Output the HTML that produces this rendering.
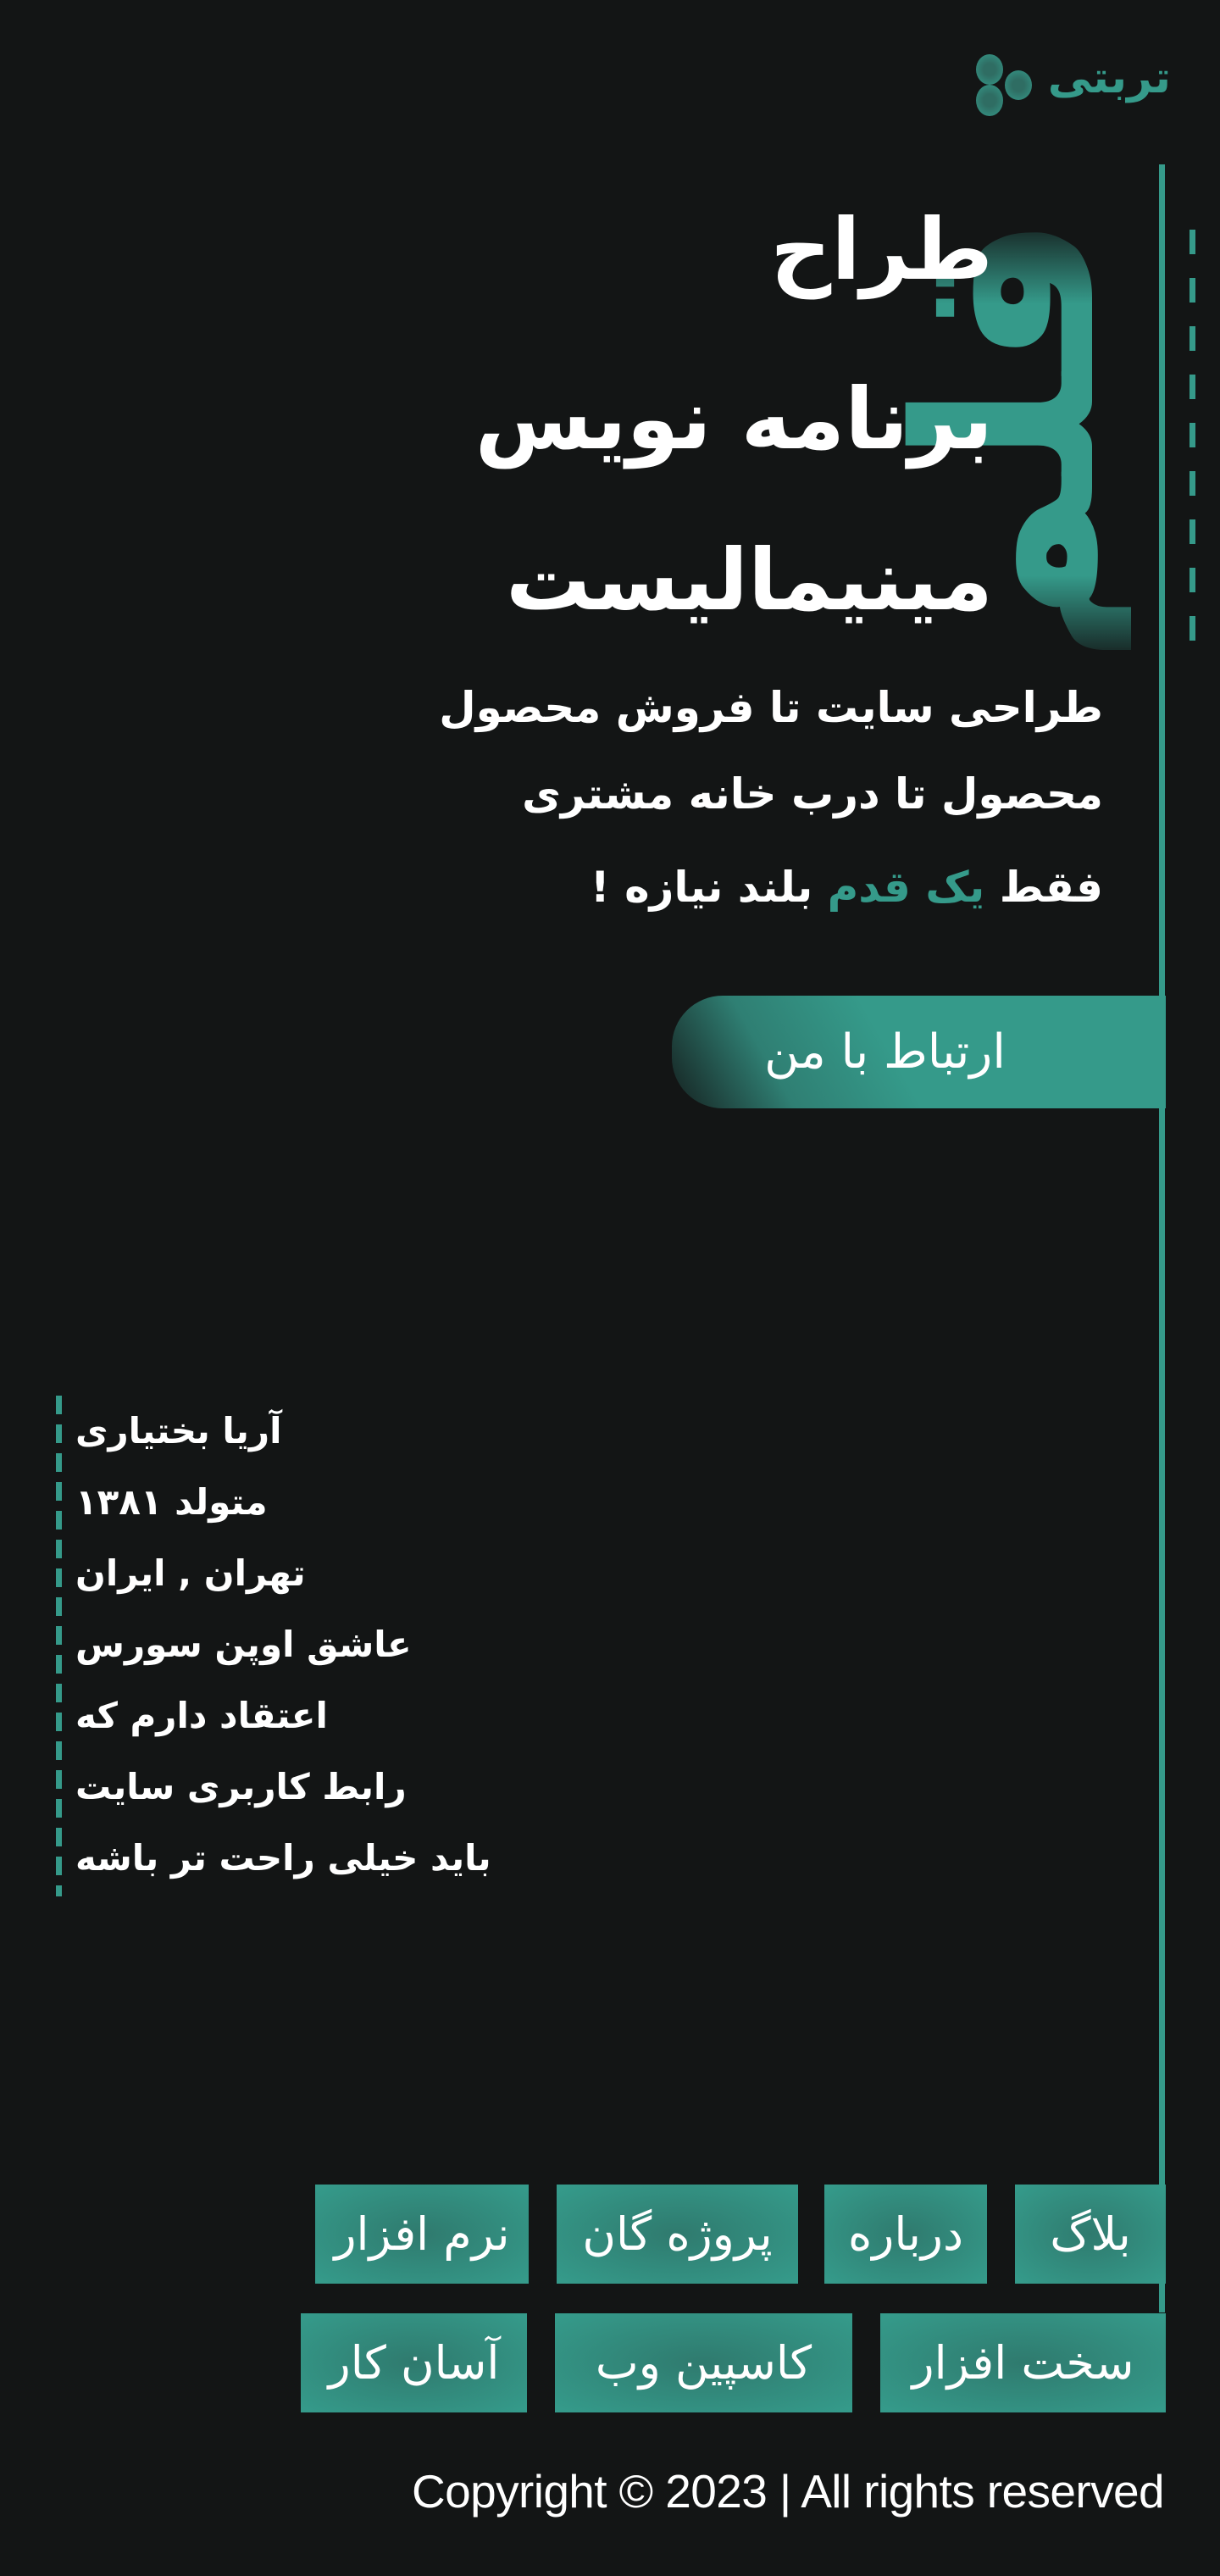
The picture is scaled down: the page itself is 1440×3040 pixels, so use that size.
<!DOCTYPE html>
<html lang="fa"><head><meta charset="utf-8">
<style>
*{margin:0;padding:0;box-sizing:border-box}
html,body{width:1440px;height:3040px;background:#131515;overflow:hidden}
body{position:relative;font-family:"DejaVu Sans","Liberation Sans",sans-serif;color:#fff}
.abs{position:absolute}
.logo{right:58px;top:62px;font-size:52px;font-weight:bold;color:#359a8a;direction:rtl}
.dot{position:absolute;border-radius:50%;background:radial-gradient(circle,#2f6d63 30%,#359a8a 100%)}
.vline{left:1368px;top:194px;width:7px;height:2535px;background:#359a8a}
.dash{left:1404px;top:271px;width:7px;height:505px;background:repeating-linear-gradient(to bottom,#359a8a 0 29px,transparent 29px 57px)}
.cal{left:1190px;top:519px;transform:translate(-50%,-50%) rotate(-90deg);font-size:290px;font-weight:bold;line-height:1;white-space:nowrap;direction:rtl;
 background:linear-gradient(to right,rgba(53,154,138,0) 0%,#359a8a 20%,#359a8a 80%,rgba(53,154,138,0) 100%);-webkit-background-clip:text;background-clip:text;color:transparent}
.h1{right:268px;direction:rtl;font-size:100px;font-weight:bold;white-space:nowrap;line-height:1}
.sub{right:138px;direction:rtl;font-size:50px;font-weight:bold;white-space:nowrap;line-height:1}
.btn{left:793px;top:1175px;width:583px;height:133px;border-radius:60px 0 0 60px;background:linear-gradient(60deg,#15201f 0%,#2f7f73 22%,#359a8a 45%,#359a8a 100%);direction:rtl;font-size:56px;display:flex;align-items:center;justify-content:center;padding-right:80px}
.bio{left:66px;top:1647px;width:7px;height:591px;background:repeating-linear-gradient(to bottom,#359a8a 0 22px,transparent 22px 34px)}
.bl{left:89px;direction:rtl;font-size:42px;font-weight:bold;white-space:nowrap;line-height:1}
.tag{position:absolute;height:117px;background:radial-gradient(ellipse at center,#2f7a6e 0%,#359a8a 95%);display:flex;align-items:center;justify-content:center;font-size:54px;direction:rtl;white-space:nowrap}
.copy{right:66px;top:2908px;font-family:"Liberation Sans",sans-serif;font-size:55px;letter-spacing:-0.6px;white-space:nowrap}
</style></head><body>
<div class="abs logo">تربتی</div>
<div class="dot" style="left:1152px;top:64px;width:32px;height:36px"></div>
<div class="dot" style="left:1186px;top:83px;width:32px;height:35px"></div>
<div class="dot" style="left:1152px;top:100px;width:32px;height:37px"></div>

<div class="abs vline"></div>
<div class="abs dash"></div>
<div class="abs cal">قلم</div>

<div class="abs h1" style="top:245px">طراح</div>
<div class="abs h1" style="top:445px">برنامه نویس</div>
<div class="abs h1" style="top:635px">مینیمالیست</div>

<div class="abs sub" style="top:810px">طراحی سایت تا فروش محصول</div>
<div class="abs sub" style="top:912px">محصول تا درب خانه مشتری</div>
<div class="abs sub" style="top:1022px">فقط <span style="color:#359a8a">یک قدم</span> بلند نیازه !</div>

<div class="abs btn">ارتباط با من</div>

<div class="abs bio"></div>
<div class="abs bl" style="top:1668px">آریا بختیاری</div>
<div class="abs bl" style="top:1752px">متولد ۱۳۸۱</div>
<div class="abs bl" style="top:1836px">تهران , ایران</div>
<div class="abs bl" style="top:1920px">عاشق اوپن سورس</div>
<div class="abs bl" style="top:2004px">اعتقاد دارم که</div>
<div class="abs bl" style="top:2088px">رابط کاربری سایت</div>
<div class="abs bl" style="top:2172px">باید خیلی راحت تر باشه</div>

<div class="tag" style="left:1198px;top:2578px;width:178px">بلاگ</div>
<div class="tag" style="left:973px;top:2578px;width:192px">درباره</div>
<div class="tag" style="left:657px;top:2578px;width:285px">پروژه گان</div>
<div class="tag" style="left:372px;top:2578px;width:252px">نرم افزار</div>
<div class="tag" style="left:1039px;top:2730px;width:337px">سخت افزار</div>
<div class="tag" style="left:655px;top:2730px;width:351px">کاسپین وب</div>
<div class="tag" style="left:355px;top:2730px;width:267px">آسان کار</div>

<div class="abs copy">Copyright © 2023 | All rights reserved</div>
</body></html>
